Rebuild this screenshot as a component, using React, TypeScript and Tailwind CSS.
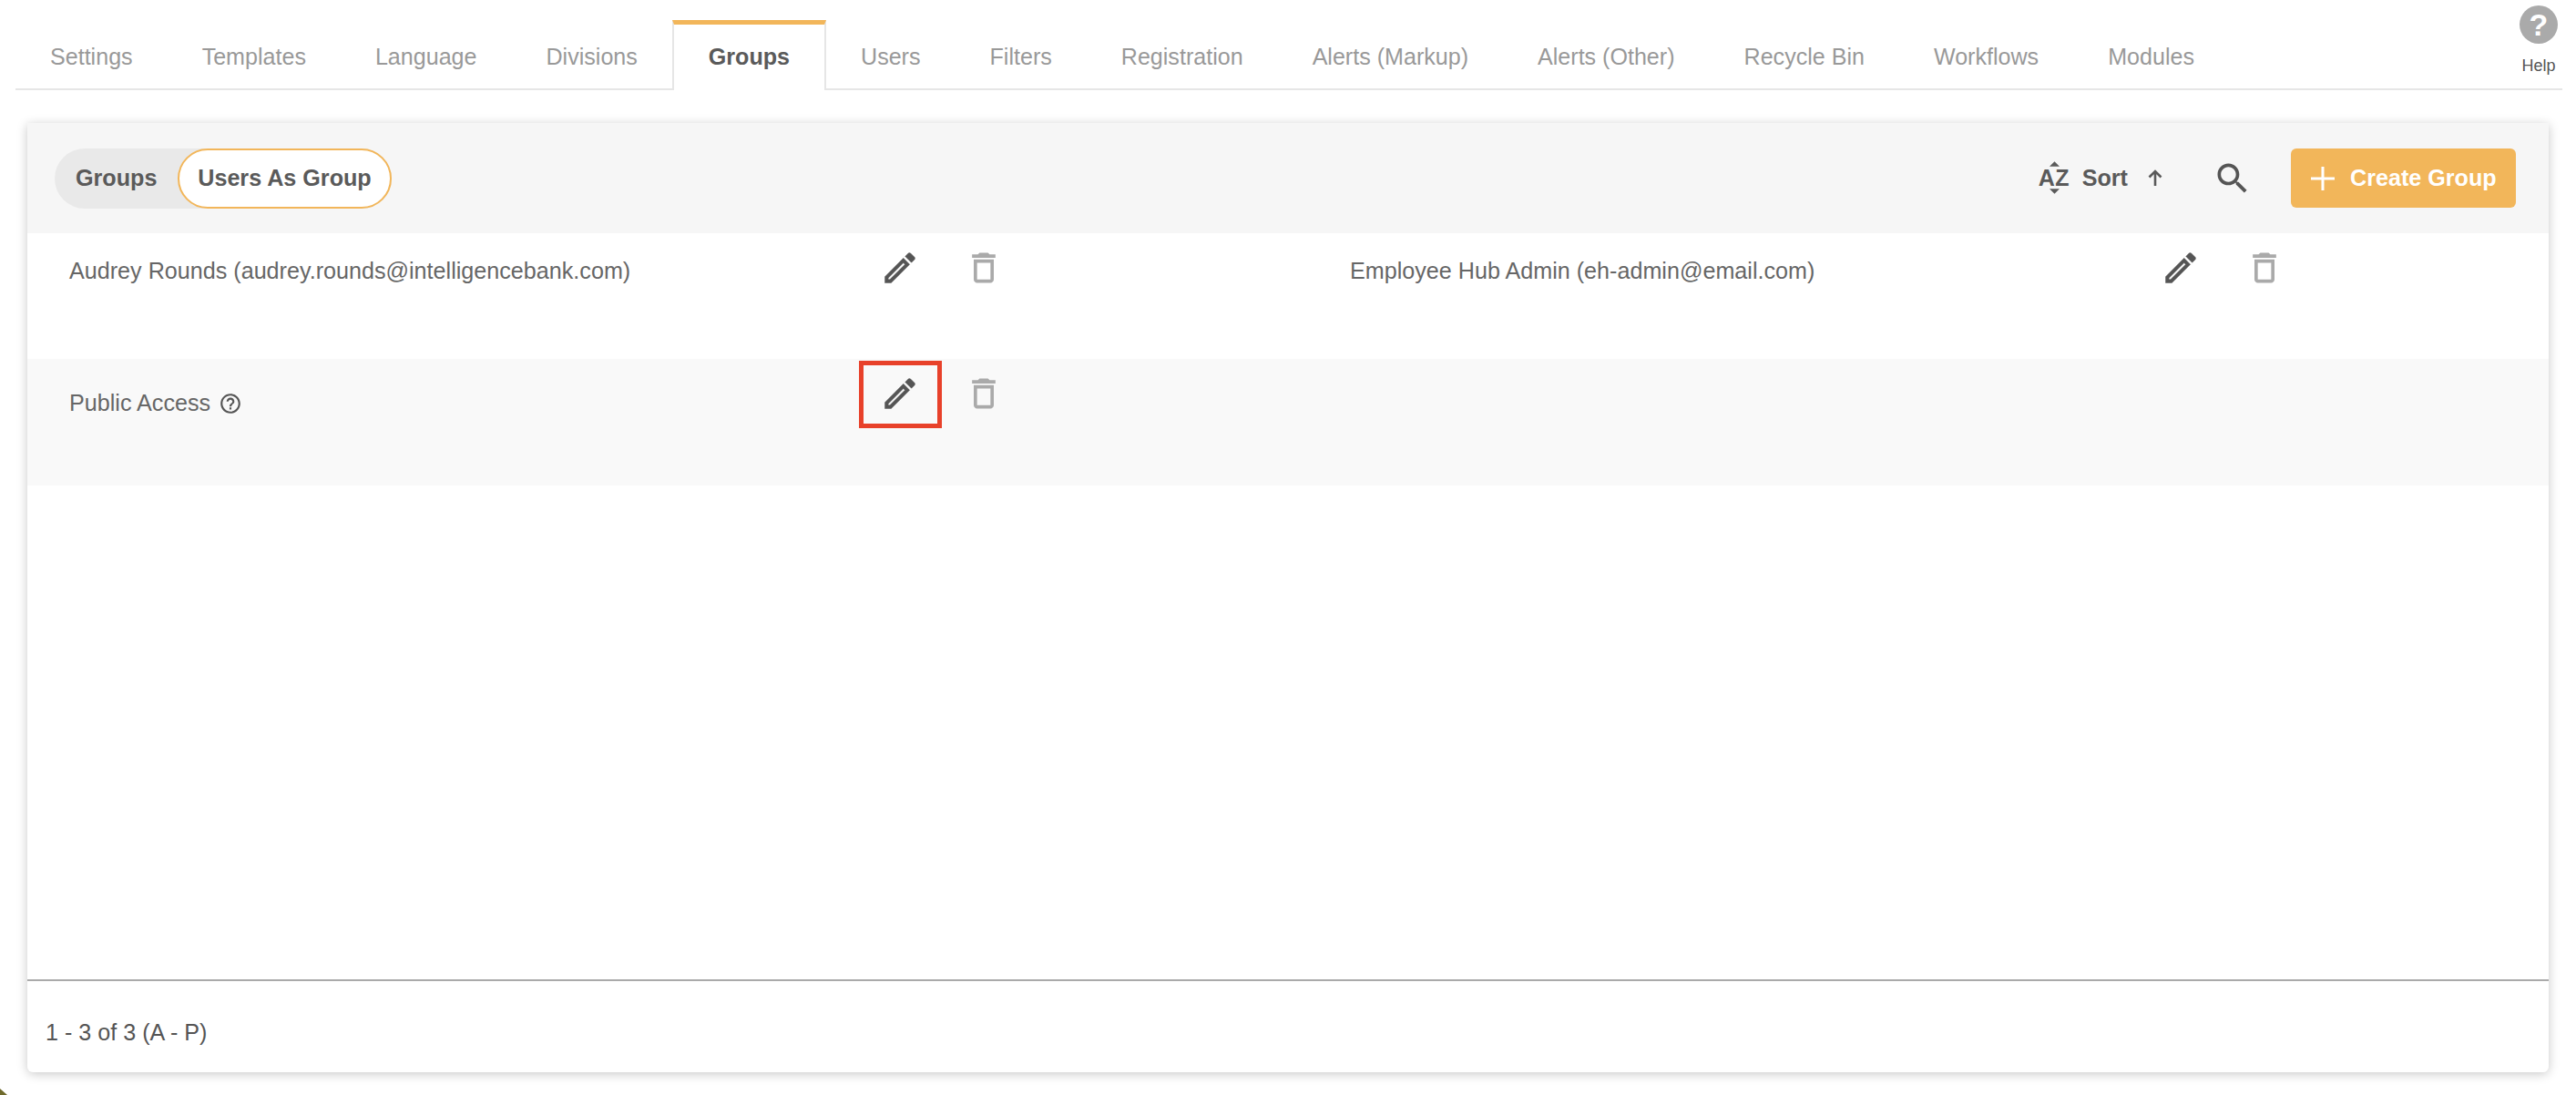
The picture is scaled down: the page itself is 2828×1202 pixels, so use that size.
import React from 'react';

const tabs = ['Settings', 'Templates', 'Language', 'Divisions', 'Groups', 'Users', 'Filters', 'Registration', 'Alerts (Markup)', 'Alerts (Other)', 'Recycle Bin', 'Workflows', 'Modules'];

const PencilIcon = () => (
  <svg viewBox="0 0 24 24" className="w-[44px] h-[44px] fill-[#555555] stroke-[#555555] stroke-[0.25] shrink-0">
    <path fillRule="evenodd" d="M14.06 6.19L3 17.25V21h3.75L17.81 9.94l-3.75-3.75zM5 19v-.92l9.06-9.06.92.92L5.92 19H5z" />
    <path d="M17.66 3c-.25 0-.51.1-.7.29l-1.83 1.83 3.75 3.75 1.83-1.83c.39-.39.39-1.02 0-1.41l-2.34-2.34c-.2-.2-.45-.29-.71-.29z" />
  </svg>
);

const TrashIcon = () => (
  <svg viewBox="0 0 24 24" className="w-[44px] h-[44px] fill-[#aaaaaa] shrink-0">
    <path d="M16 9v10H8V9h8m-1.5-6h-5l-1 1H5v2h14V4h-3.5l-1-1zM18 7H6v12c0 1.1.9 2 2 2h8c1.1 0 2-.9 2-2V7z" />
  </svg>
);

const RowActions = () => (
  <div className="flex items-center gap-[48px]">
    <PencilIcon />
    <TrashIcon />
  </div>
);

export default function App() {
  return (
    <div className="relative w-[2828px] h-[1202px] overflow-hidden bg-white text-[25.15px] text-[#5a5a5a] font-['Liberation_Sans',Arial,sans-serif]">
      <div className="flex items-end justify-between h-[99px] ml-[17px] mr-[15px] border-b-2 border-[#e6e6e6]">
        <div className="relative flex items-stretch h-[77px] -mb-[2px] text-[25.08px]">
          {tabs.map((tab) =>
            tab === 'Groups' ? (
              <div key={tab} className="flex items-center px-[38px] bg-white font-bold border-x-2 border-x-[#e6e6e6] border-t-[5px] border-t-[#f2b65a]">
                {tab}
              </div>
            ) : (
              <div key={tab} className="flex items-center px-[38px] pt-[5px] text-[#999999]">
                {tab}
              </div>
            )
          )}
        </div>
        <div className="flex flex-col items-center self-start pt-[6px] w-[42px] mr-[5px]">
          <div className="flex items-center justify-center w-[42px] h-[42px] rounded-full bg-[#aaaaaa] text-white text-[34px] font-bold leading-none">?</div>
          <div className="mt-[15px] text-[18px] leading-none text-[#555555]">Help</div>
        </div>
      </div>

      <div className="mt-[36px] ml-[30px] w-[2768px] h-[1042px] flex flex-col rounded-b-[6px] bg-white shadow-[0_2px_12px_rgba(0,0,0,0.22)]">
        <div className="flex items-center justify-between h-[121px] pl-[30px] pr-[36px] bg-[#f6f6f6]">
          <div className="flex items-center h-[66px] rounded-full bg-[#e9e9e9] font-bold">
            <span className="w-[135px] pl-[23px]">Groups</span>
            <span className="flex items-center justify-center w-[235px] h-[66px] rounded-full bg-white border-2 border-[#f2b65a]">Users As Group</span>
          </div>
          <div className="flex items-center">
            <div className="flex items-center font-bold">
              <div className="relative w-[35px] h-[36px] mr-[13px]">
                <span className="absolute left-0 top-[3px] text-[25px] leading-[30px] tracking-[0.5px]">AZ</span>
                <svg viewBox="0 0 12 6" className="absolute left-[12px] top-0 w-[11px] h-[6px] fill-[#5a5a5a]"><path d="M6 0l6 6H0z" /></svg>
                <svg viewBox="0 0 12 6" className="absolute left-[12px] bottom-0 w-[11px] h-[6px] fill-[#5a5a5a]"><path d="M0 0h12L6 6z" /></svg>
              </div>
              <span>Sort</span>
              <svg viewBox="0 0 16 18" className="ml-[22px] w-[16px] h-[18px] stroke-[#5a5a5a] fill-none stroke-[2.6]"><path d="M8 18V2M1.5 8.5L8 2l6.5 6.5" /></svg>
            </div>
            <svg viewBox="0 0 24 24" className="ml-[55px] w-[44px] h-[44px] fill-[#555555]">
              <path d="M15.5 14h-.79l-.28-.27C15.41 12.59 16 11.11 16 9.5 16 5.91 13.09 3 9.5 3S3 5.91 3 9.5 5.91 16 9.5 16c1.61 0 3.09-.59 4.23-1.57l.27.28v.79l5 4.99L20.49 19l-4.99-5zm-6 0C7.01 14 5 11.99 5 9.5S7.01 5 9.5 5 14 7.01 14 9.5 11.99 14 9.5 14z" />
            </svg>
            <div className="ml-[42px] flex items-center h-[65px] w-[247px] pl-[22px] rounded-[6px] bg-[#f2b65a] text-white font-bold">
              <svg viewBox="0 0 26 26" className="w-[26px] h-[26px] stroke-white fill-none stroke-[3] mr-[17px]"><path d="M13 0v26M0 13h26" /></svg>
              Create Group
            </div>
          </div>
        </div>

        <div className="flex-1 min-h-0 text-[#666666]">
          <div className="grid grid-cols-[1406px_1fr] h-[138px] pl-[46px] pt-[16px]">
            <div className="flex items-start">
              <span className="w-[890px] pt-[7px]">Audrey Rounds (audrey.rounds@intelligencebank.com)</span>
              <RowActions />
            </div>
            <div className="flex items-start">
              <span className="w-[890px] pt-[7px]">Employee Hub Admin (eh-admin@email.com)</span>
              <RowActions />
            </div>
          </div>
          <div className="relative h-[139px] pl-[46px] pt-[16px] bg-[#f9f9f9]">
            <div className="flex items-start">
              <span className="flex items-center gap-[9px] w-[890px] pt-[14px]">
                Public Access
                <svg viewBox="0 0 24 24" className="w-[26px] h-[26px] fill-[#555555]">
                  <path d="M11 18h2v-2h-2v2zm1-16C6.48 2 2 6.48 2 12s4.48 10 10 10 10-4.48 10-10S17.52 2 12 2zm0 18c-4.41 0-8-3.59-8-8s3.59-8 8-8 8 3.59 8 8-3.59 8-8 8zm0-14c-2.21 0-4 1.79-4 4h2c0-1.1.9-2 2-2s2 .9 2 2c0 2-3 1.75-3 5h2c0-2.25 3-2.5 3-5 0-2.21-1.79-4-4-4z" />
                </svg>
              </span>
              <RowActions />
            </div>
            <div className="absolute left-[913px] top-[2px] w-[91px] h-[74px] border-[5px] border-[#e8412a]" />
          </div>
        </div>

        <div className="flex items-center h-[102px] pl-[20px] pt-[14px] border-t-2 border-[#aaaaaa] text-[#555555]">
          1 - 3 of 3 (A - P)
        </div>
      </div>

      <svg viewBox="0 0 8 7" className="absolute left-0 bottom-0 w-[8px] h-[7px] fill-[#6f6a2c]"><path d="M0 0l8 7H0z" /></svg>
    </div>
  );
}
